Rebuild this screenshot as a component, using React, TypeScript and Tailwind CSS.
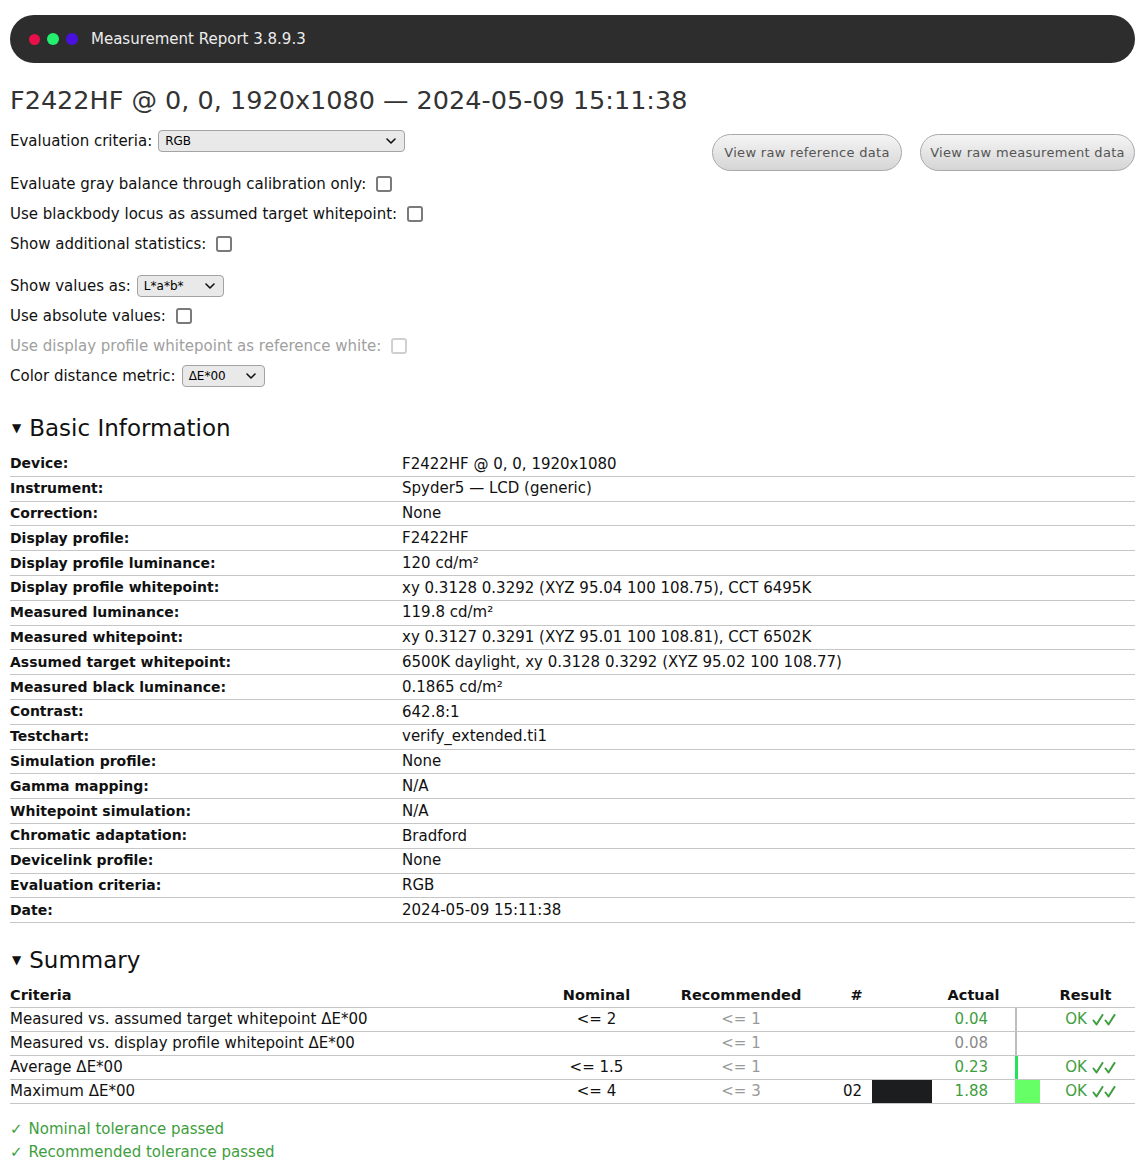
import React from "react"

const basicInfo: [string, string][] = [
  ["Device:", "F2422HF @ 0, 0, 1920x1080"],
  ["Instrument:", "Spyder5 — LCD (generic)"],
  ["Correction:", "None"],
  ["Display profile:", "F2422HF"],
  ["Display profile luminance:", "120 cd/m²"],
  ["Display profile whitepoint:", "xy 0.3128 0.3292 (XYZ 95.04 100 108.75), CCT 6495K"],
  ["Measured luminance:", "119.8 cd/m²"],
  ["Measured whitepoint:", "xy 0.3127 0.3291 (XYZ 95.01 100 108.81), CCT 6502K"],
  ["Assumed target whitepoint:", "6500K daylight, xy 0.3128 0.3292 (XYZ 95.02 100 108.77)"],
  ["Measured black luminance:", "0.1865 cd/m²"],
  ["Contrast:", "642.8:1"],
  ["Testchart:", "verify_extended.ti1"],
  ["Simulation profile:", "None"],
  ["Gamma mapping:", "N/A"],
  ["Whitepoint simulation:", "N/A"],
  ["Chromatic adaptation:", "Bradford"],
  ["Devicelink profile:", "None"],
  ["Evaluation criteria:", "RGB"],
  ["Date:", "2024-05-09 15:11:38"],
]

type SummaryRow = {
  criteria: string
  nominal: string
  recommended: string
  patch?: string
  actual: string
  passed: boolean
  bar: number
  barColor: string
  ok: boolean
}

const summary: SummaryRow[] = [
  { criteria: "Measured vs. assumed target whitepoint ΔE*00", nominal: "<= 2", recommended: "<= 1", actual: "0.04", passed: true, bar: 2, barColor: "#bdbdbd", ok: true },
  { criteria: "Measured vs. display profile whitepoint ΔE*00", nominal: "", recommended: "<= 1", actual: "0.08", passed: false, bar: 2, barColor: "#bdbdbd", ok: false },
  { criteria: "Average ΔE*00", nominal: "<= 1.5", recommended: "<= 1", actual: "0.23", passed: true, bar: 3, barColor: "#22e35a", ok: true },
  { criteria: "Maximum ΔE*00", nominal: "<= 4", recommended: "<= 3", patch: "02", actual: "1.88", passed: true, bar: 25, barColor: "#66ff66", ok: true },
]

const Checkbox = ({ disabled }: { disabled?: boolean }) => (
  <span
    className={`inline-block w-4 h-4 rounded-[3px] border-2 bg-white ${
      disabled ? "border-[#d0d0d0]" : "border-[#7a7a7a]"
    }`}
  />
)

const Select = ({ value, width }: { value: string; width: string }) => (
  <span
    className={`inline-flex items-center justify-between h-[22px] rounded-[4px] border border-[#a3a3a3] bg-[#e9e9e9] pl-[6px] pr-[8px] text-[12px] text-black ${width}`}
  >
    <span>{value}</span>
    <svg width="10" height="6" viewBox="0 0 10 6" fill="none">
      <path d="M1 1l4 4 4-4" stroke="#111" strokeWidth="1.6" strokeLinecap="round" strokeLinejoin="round" />
    </svg>
  </span>
)

const Checks = () => (
  <svg width="24" height="12" viewBox="0 0 24 12" fill="none">
    <path d="M1.5 6.5l3 4 6-9.5" stroke="#3e9e3e" strokeWidth="2" strokeLinecap="round" strokeLinejoin="round" />
    <path d="M13.5 6.5l3 4 6-9.5" stroke="#3e9e3e" strokeWidth="2" strokeLinecap="round" strokeLinejoin="round" />
  </svg>
)

const Row = ({ children, disabled }: { children: React.ReactNode; disabled?: boolean }) => (
  <div className={`h-[30px] flex items-center gap-[10px] ${disabled ? "text-[#a0a0a0]" : "text-[#111]"}`}>
    {children}
  </div>
)

const SectionTitle = ({ title }: { title: string }) => (
  <div className="h-[32px] flex items-center gap-[8px] text-[#111]">
    <span className="text-[12px] pl-[2px]">▼</span>
    <span className="text-[23px]">{title}</span>
  </div>
)

const summaryCols = "grid grid-cols-[538px_97px_192px_35px_60px_83px_25px_1fr]"

export default function App() {
  return (
    <div
      className="min-h-[1172px] bg-white pl-[10px] pr-[7px] pt-[15px] text-[15px] text-[#111]"
      style={{ fontFamily: '"DejaVu Sans", Verdana, sans-serif' }}
    >
      {/* window title bar */}
      <div className="h-[48px] rounded-full bg-[#2d2d2d] flex items-center pl-[19px]">
        <div className="flex items-center gap-[7px]">
          <span className="w-[11px] h-[11px] rounded-full bg-[#e8104a]" />
          <span className="w-[12px] h-[12px] rounded-full bg-[#22f06e]" />
          <span className="w-[12px] h-[12px] rounded-full bg-[#4a10e0]" />
        </div>
        <span className="ml-[13px] text-[15px] text-[#ececec]">Measurement Report 3.8.9.3</span>
      </div>

      {/* heading */}
      <h1 className="mt-[19px] h-[36px] leading-[36px] text-[25.5px] text-[#333] font-normal">
        F2422HF @ 0, 0, 1920x1080 — 2024-05-09 15:11:38
      </h1>

      {/* options */}
      <div className="mt-[8px] flex justify-between items-start">
        <div>
          <Row>
            <span className="-mr-[4px]">Evaluation criteria:</span>
            <Select value="RGB" width="w-[247px]" />
          </Row>
          <div className="mt-[13px]">
            <Row>
              <span>Evaluate gray balance through calibration only:</span>
              <Checkbox />
            </Row>
            <Row>
              <span>Use blackbody locus as assumed target whitepoint:</span>
              <Checkbox />
            </Row>
            <Row>
              <span>Show additional statistics:</span>
              <Checkbox />
            </Row>
          </div>
          <div className="mt-[12px]">
            <Row>
              <span className="-mr-[4px]">Show values as:</span>
              <Select value="L*a*b*" width="w-[87px]" />
            </Row>
            <Row>
              <span>Use absolute values:</span>
              <Checkbox />
            </Row>
            <Row disabled>
              <span>Use display profile whitepoint as reference white:</span>
              <Checkbox disabled />
            </Row>
            <Row>
              <span className="-mr-[4px]">Color distance metric:</span>
              <Select value="ΔE*00" width="w-[83px]" />
            </Row>
          </div>
        </div>
        <div className="flex gap-[18px] mt-[8px]">
          <button
            type="button"
            className="w-[190px] h-[37px] rounded-full border border-[#a9a9a9] bg-gradient-to-b from-[#f5f5f5] to-[#d5d5d5] text-[13px] text-[#555] tracking-[0.3px]"
          >
            View raw reference data
          </button>
          <button
            type="button"
            className="w-[215px] h-[37px] rounded-full border border-[#a9a9a9] bg-gradient-to-b from-[#f5f5f5] to-[#d5d5d5] text-[13px] text-[#555] tracking-[0.3px]"
          >
            View raw measurement data
          </button>
        </div>
      </div>

      {/* basic information */}
      <div className="mt-[21px]">
        <SectionTitle title="Basic Information" />
      </div>
      <div className="mt-[8px]">
        {basicInfo.map(([label, value]) => (
          <div key={label} className="h-[24.8px] flex items-center border-b border-[#c6c6c6]">
            <span className="w-[392px] font-bold text-[14px]">{label}</span>
            <span>{value}</span>
          </div>
        ))}
      </div>

      {/* summary */}
      <div className="mt-[21px]">
        <SectionTitle title="Summary" />
      </div>
      <div className="mt-[8px]">
        <div className={`${summaryCols} h-[24px] items-center border-b border-[#c6c6c6] font-bold text-[14.5px]`}>
          <span>Criteria</span>
          <span className="text-center">Nominal</span>
          <span className="text-center">Recommended</span>
          <span className="text-center pl-[4px]">#</span>
          <span />
          <span className="text-center">Actual</span>
          <span />
          <span className="text-center pr-[4px]">Result</span>
        </div>
        {summary.map((r) => (
          <div key={r.criteria} className={`${summaryCols} h-[24px] items-stretch border-b border-[#c6c6c6]`}>
            <span className="flex items-center">{r.criteria}</span>
            <span className="flex items-center justify-center">{r.nominal}</span>
            <span className="flex items-center justify-center text-[#999]">{r.recommended}</span>
            <span className="flex items-center justify-end pr-[10px]">{r.patch}</span>
            <span className={r.patch ? "bg-[#1b1d1f]" : ""} />
            <span className={`flex items-center justify-end pr-[27px] ${r.passed ? "text-[#3e9e3e]" : "text-[#8a8a8a]"}`}>
              {r.actual}
            </span>
            <span className="flex">
              <span className="h-full" style={{ width: r.bar, backgroundColor: r.barColor }} />
            </span>
            <span className="flex items-center justify-center gap-[5px] pl-[6px] text-[#3e9e3e]">
              {r.ok && (
                <>
                  OK <Checks />
                </>
              )}
            </span>
          </div>
        ))}
      </div>

      <div className="mt-[14px] text-[#3e9e3e]">
        <div className="h-[23px] flex items-center gap-[6px]">
          <span className="font-bold">✓</span>
          <span>Nominal tolerance passed</span>
        </div>
        <div className="h-[23px] flex items-center gap-[6px]">
          <span className="font-bold">✓</span>
          <span>Recommended tolerance passed</span>
        </div>
      </div>
    </div>
  )
}
